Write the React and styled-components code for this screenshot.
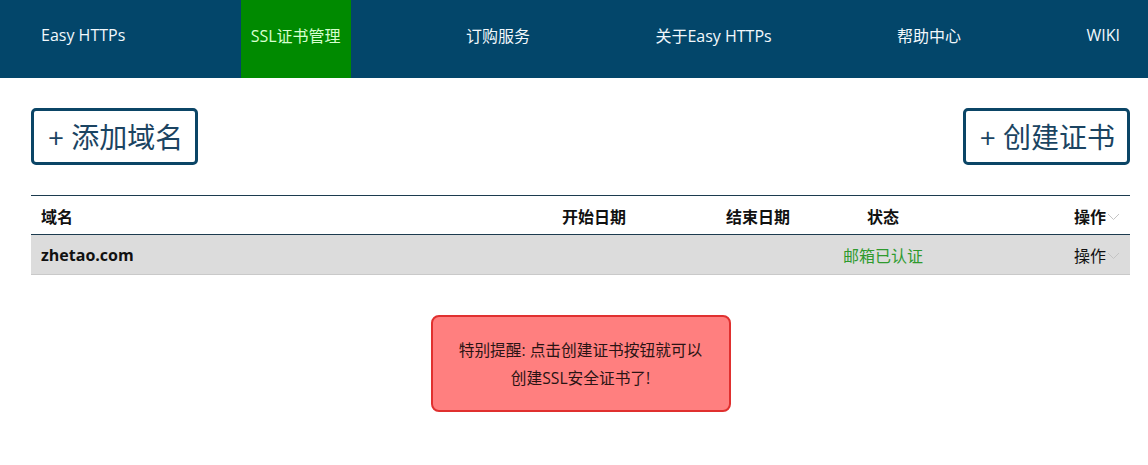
import React from "react"
import styled, { createGlobalStyle } from "styled-components"

const FONT = `"Open Sans", "Noto Sans CJK SC", "Noto Sans", sans-serif`

const GlobalStyle = createGlobalStyle`
  body {
    margin: 0;
    font-family: ${FONT};
    background: #fff;
    color: #111;
  }
`

const navItems = ["Easy HTTPs", "SSL证书管理", "订购服务", "关于Easy HTTPs", "帮助中心", "WIKI"]

const Chevron = () => (
  <svg width="13" height="8" viewBox="0 0 13 8" fill="none">
    <polyline points="1,1 6.5,6.5 12,1" stroke="#c4c4c4" strokeWidth="1" />
  </svg>
)

const App = () => {
  return (
    <>
      <GlobalStyle />
      <NavBar>
        {navItems.map((item, i) => (
          <NavItem key={item} active={i === 1}>
            {item}
          </NavItem>
        ))}
      </NavBar>

      <Main>
        <Toolbar>
          <OutlineButton>+ 添加域名</OutlineButton>
          <OutlineButton>+ 创建证书</OutlineButton>
        </Toolbar>

        <Table>
          <HeadRow>
            <Cell>域名</Cell>
            <Cell align="center">开始日期</Cell>
            <Cell align="center">结束日期</Cell>
            <Cell align="center">状态</Cell>
            <ActionCell>
              操作
              <Chevron />
            </ActionCell>
          </HeadRow>
          <BodyRow>
            <Cell bold>zhetao.com</Cell>
            <Cell align="center"></Cell>
            <Cell align="center"></Cell>
            <Status>邮箱已认证</Status>
            <ActionCell>
              操作
              <Chevron />
            </ActionCell>
          </BodyRow>
        </Table>

        <Notice>
          特别提醒: 点击创建证书按钮就可以
          <br />
          创建SSL安全证书了!
        </Notice>
      </Main>
    </>
  )
}

const NavBar = styled.nav`
  height: 78px;
  background: #03466a;
  display: flex;
  justify-content: space-between;
  align-items: stretch;
  padding: 0 18px 0 31px;
`

const NavItem = styled.a`
  display: flex;
  align-items: center;
  padding: 0 10px 9px;
  font-size: 16px;
  color: ${(p) => (p.active ? "#d6ffcf" : "#f2f8fc")};
  background: ${(p) => (p.active ? "#008a00" : "transparent")};
  white-space: nowrap;
`

const Main = styled.main`
  padding: 30px 18px 0 31px;
`

const Toolbar = styled.div`
  display: flex;
  justify-content: space-between;
  align-items: center;
`

const OutlineButton = styled.button`
  height: 57px;
  padding: 0 12px 0 14px;
  border: 3px solid #0b4566;
  border-radius: 5px;
  background: #fff;
  color: #1b4462;
  font-family: ${FONT};
  font-size: 28px;
  line-height: 1;
`

const Table = styled.div`
  margin-top: 30px;
  border-top: 1px solid #1c3b4f;
  border-bottom: 1px solid #c9c9c9;
`

const Row = styled.div`
  display: grid;
  grid-template-columns: 454px 218px 110px 140px 1fr;
  align-items: center;
  font-size: 16px;
`

const HeadRow = styled(Row)`
  height: 36px;
  padding-top: 2px;
  font-weight: 700;
  border-bottom: 1px solid #1c3b4f;
`

const BodyRow = styled(Row)`
  height: 39px;
  background: #dcdcdc;
`

const Cell = styled.div`
  padding: 0 10px;
  text-align: ${(p) => p.align || "left"};
  font-weight: ${(p) => (p.bold ? 700 : "inherit")};
  white-space: nowrap;
`

const Status = styled(Cell).attrs({ align: "center" })`
  color: #2e9a2e;
  font-weight: 400;
`

const ActionCell = styled.div`
  display: flex;
  justify-content: flex-end;
  align-items: center;
  gap: 1px;
  padding-right: 10px;
  white-space: nowrap;

  svg {
    margin-top: 2px;
  }
`

const Notice = styled.div`
  width: 296px;
  height: 93px;
  margin: 40px auto 0;
  border: 2px solid #e0302f;
  border-radius: 8px;
  background: #ff7f7f;
  color: #2a1414;
  font-size: 15.7px;
  line-height: 28px;
  text-align: center;
  display: flex;
  flex-direction: column;
  justify-content: center;
`

export default App
